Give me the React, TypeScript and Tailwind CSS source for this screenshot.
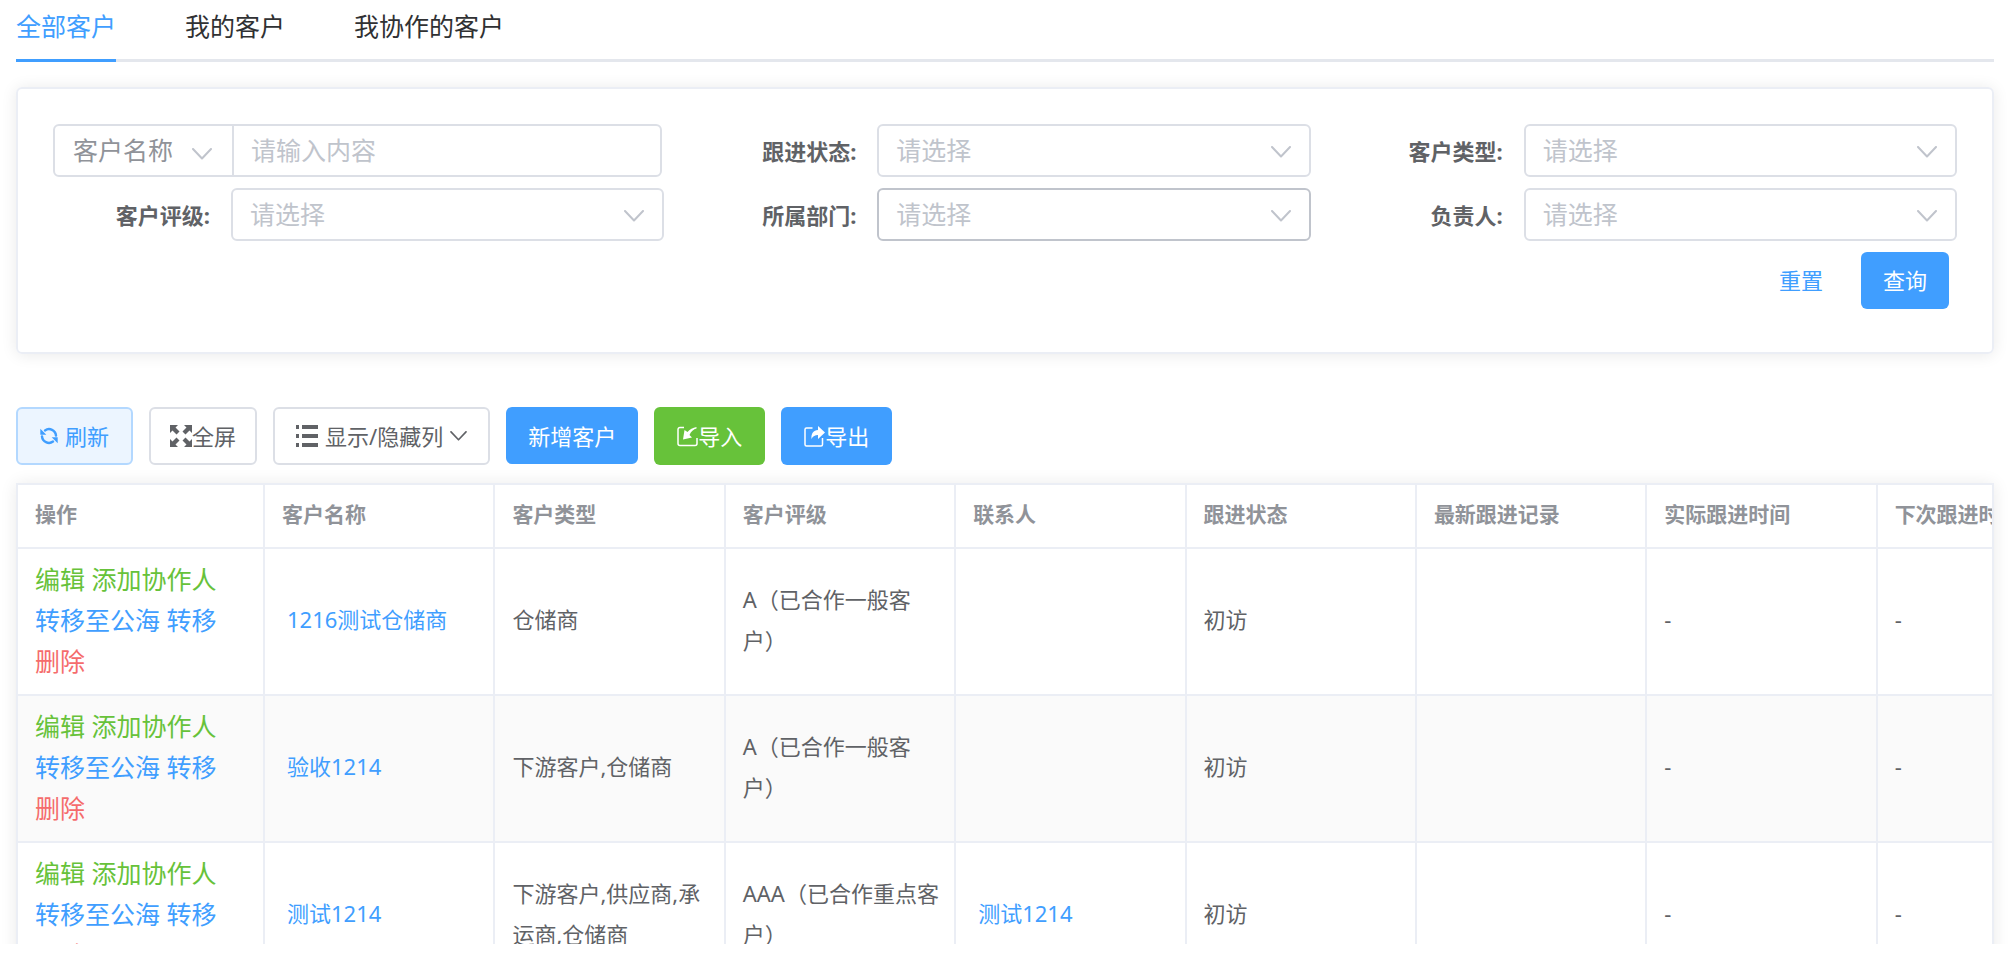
import { useState, type ReactNode } from "react";
import clsx from "clsx";

interface Customer {
  id: number;
  name: string;
  type: string;
  level: string;
  contact?: string;
  status: string;
  lastRecord?: string;
  actualTime: string;
  nextTime: string;
}

const TABS = ["全部客户", "我的客户", "我协作的客户"];

const COLUMNS = [
  "操作",
  "客户名称",
  "客户类型",
  "客户评级",
  "联系人",
  "跟进状态",
  "最新跟进记录",
  "实际跟进时间",
  "下次跟进时间",
];

const CUSTOMERS: Customer[] = [
  {
    id: 1,
    name: "1216测试仓储商",
    type: "仓储商",
    level: "A（已合作一般客户）",
    status: "初访",
    actualTime: "-",
    nextTime: "-",
  },
  {
    id: 2,
    name: "验收1214",
    type: "下游客户,仓储商",
    level: "A（已合作一般客户）",
    status: "初访",
    actualTime: "-",
    nextTime: "-",
  },
  {
    id: 3,
    name: "测试1214",
    type: "下游客户,供应商,承运商,仓储商",
    level: "AAA（已合作重点客户）",
    contact: "测试1214",
    status: "初访",
    actualTime: "-",
    nextTime: "-",
  },
];

function ChevronIcon({ className }: { className?: string }) {
  return (
    <svg
      viewBox="0 0 20 12"
      fill="none"
      stroke="currentColor"
      strokeWidth="2"
      strokeLinecap="round"
      strokeLinejoin="round"
      className={className}
      aria-hidden="true"
    >
      <path d="M1 1 10 10.500 19 1" />
    </svg>
  );
}

function RefreshIcon() {
  return (
    <svg viewBox="0 0 18 18" fill="none" className="h-[18px] w-[18px]" aria-hidden="true">
      <path d="M5 3.400A7 7 0 0 1 16 8.600" stroke="currentColor" strokeWidth="2.400" strokeLinecap="round" />
      <path d="M13 14.600A7 7 0 0 1 2 9.400" stroke="currentColor" strokeWidth="2.400" strokeLinecap="round" />
      <path d="M.3 1.800v6h6z" fill="currentColor" />
      <path d="M17.700 16.200v-6h-6z" fill="currentColor" />
    </svg>
  );
}

function FullscreenIcon() {
  return (
    <svg viewBox="0 0 22 22" fill="currentColor" className="h-[22px] w-[22px]" aria-hidden="true">
      <path d="M0 0h8L5.500 2.500l4 4-3 3-4-4L0 8z" />
      <path d="M22 0v8l-2.500-2.500-4 4-3-3 4-4L14 0z" />
      <path d="M0 22v-8l2.500 2.500 4-4 3 3-4 4L8 22z" />
      <path d="M22 22h-8l2.500-2.500-4-4 3-3 4 4L22 14z" />
    </svg>
  );
}

function ListIcon() {
  return (
    <svg viewBox="0 0 22 22" fill="currentColor" className="h-[22px] w-[22px]" aria-hidden="true">
      <path d="M0 0h3v4H0zM6 0h16v4H6zM0 9h3v4H0zM6 9h16v4H6zM0 18h3v4H0zM6 18h16v4H6z" />
    </svg>
  );
}

function ImportIcon() {
  return (
    <svg viewBox="0 0 21 21" fill="none" className="h-[21px] w-[21px]" aria-hidden="true">
      <path
        d="M7 1.500H3A2 2 0 0 0 1 3.500V17.500A2 2 0 0 0 3 19.500H18A2 2 0 0 0 20 17.500V12"
        stroke="currentColor"
        strokeWidth="1.500"
      />
      <path
        d="M19.500 1C16 1.500 12.500 3.500 10.500 6L7.500 4 6 13.500 15 11.500 12.500 9C14 5.500 16.500 3 19.500 2.500z"
        fill="currentColor"
      />
    </svg>
  );
}

function ExportIcon() {
  return (
    <svg viewBox="0 0 21 21" fill="none" className="h-[21px] w-[21px]" aria-hidden="true">
      <path
        d="M8.500 2H2.500A1.500 1.500 0 0 0 1 3.500V18.500A1.500 1.500 0 0 0 2.500 20H17A1.500 1.500 0 0 0 18.500 18.500V12"
        stroke="currentColor"
        strokeWidth="1.500"
      />
      <path d="M14 0 21 6.500 14 13V9C11 9 9 10 7.500 13 7 7.500 9.500 4 14 4z" fill="currentColor" />
    </svg>
  );
}

interface FilterSelectProps {
  id: string;
  label: string;
  active?: boolean;
}

function FilterSelect({ id, label, active = false }: FilterSelectProps) {
  return (
    <div className="flex items-center">
      <label htmlFor={id} className="w-[213px] pr-[21px] text-right text-[22px] leading-[40px] font-bold text-[#606266]">
        {label}:
      </label>
      <div className="relative flex-1">
        <select
          id={id}
          defaultValue=""
          className={clsx(
            "block h-[53px] w-full appearance-none rounded-md border-2 bg-white px-[17px] text-[25px] leading-[49px] text-[#c0c4cc] outline-none",
            active ? "border-[#c0c4cc]" : "border-[#dcdfe6]",
          )}
        >
          <option value="">请选择</option>
        </select>
        <ChevronIcon className="pointer-events-none absolute top-[22px] right-5 h-3 w-5 text-[#c0c4cc]" />
      </div>
    </div>
  );
}

function ToolbarButton({ className, children }: { className: string; children: ReactNode }) {
  return (
    <button
      type="button"
      className={clsx("flex items-center rounded-md text-[22px] leading-[30px] whitespace-nowrap", className)}
    >
      {children}
    </button>
  );
}

function RowActions() {
  return (
    <div className="pt-[2px] text-[25px] leading-[41px]">
      <div className="text-[#67c23a]">
        <button type="button">编辑</button> <button type="button">添加协作人</button>
      </div>
      <div className="text-[#409eff]">
        <button type="button">转移至公海</button> <button type="button">转移</button>
      </div>
      <div className="text-[#f56c6c]">
        <button type="button">删除</button>
      </div>
    </div>
  );
}

export default function App() {
  const [activeTab, setActiveTab] = useState(TABS[0]);

  return (
    <div className="h-screen bg-white pb-[10px] font-['Noto_Sans','Noto_Sans_CJK_SC',sans-serif] text-[#606266]">
      <div className="h-full overflow-hidden pr-[14px] pl-4">
        {/* Tabs */}
        <nav className="flex gap-[69px] border-b-3 border-[#e4e7ed]">
          {TABS.map((tab) => (
            <button
              key={tab}
              type="button"
              onClick={() => setActiveTab(tab)}
              className={clsx(
                "-mb-[3px] h-[62px] border-b-3 pb-[7px] text-[25px] leading-[52px]",
                tab === activeTab ? "border-[#409eff] text-[#409eff]" : "border-transparent text-[#303133]",
              )}
            >
              {tab}
            </button>
          ))}
        </nav>

        {/* Filters */}
        <form
          onSubmit={(e) => e.preventDefault()}
          className="mt-[25px] rounded-md border-2 border-[#ebeef5] pt-[35px] pr-[35px] pb-[43px] shadow-[0_1px_16px_rgba(0,0,0,0.09)]"
        >
          <div className="grid grid-cols-3 gap-y-[11px]">
            <div className="mr-[2px] ml-[35px] flex h-[53px] rounded-md border-2 border-[#dcdfe6]">
              <div className="relative w-[179px] border-r-2 border-[#dcdfe6]">
                <select
                  aria-label="搜索字段"
                  className="h-full w-full appearance-none pl-[18px] text-[25px] leading-[49px] text-[#909399] outline-none"
                >
                  <option>客户名称</option>
                </select>
                <ChevronIcon className="pointer-events-none absolute top-[22px] right-5 h-3 w-5 text-[#c0c4cc]" />
              </div>
              <input
                type="text"
                aria-label="搜索内容"
                placeholder="请输入内容"
                className="w-full min-w-0 flex-1 bg-transparent px-[17px] text-[25px] outline-none placeholder:text-[#c0c4cc]"
              />
            </div>
            <FilterSelect id="status" label="跟进状态" />
            <FilterSelect id="type" label="客户类型" />
            <FilterSelect id="level" label="客户评级" />
            <FilterSelect id="department" label="所属部门" active />
            <FilterSelect id="owner" label="负责人" />
          </div>
          <div className="mt-[11px] flex items-center justify-end gap-[38px] pr-2 text-[22px]">
            <button type="reset" className="text-[#409eff]">
              重置
            </button>
            <button type="submit" className="h-[57px] rounded-md bg-[#409eff] px-[22px] text-white">
              查询
            </button>
          </div>
        </form>

        {/* Toolbar */}
        <div className="mt-[53px] flex items-start gap-4">
          <ToolbarButton className="h-[58px] gap-[7px] border-2 border-[#b3d8ff] bg-[#ecf5ff] px-[22px] text-[#409eff]">
            <RefreshIcon />
            刷新
          </ToolbarButton>
          <ToolbarButton className="h-[58px] border-2 border-[#dcdfe6] bg-white px-[19px]">
            <FullscreenIcon />
            全屏
          </ToolbarButton>
          <ToolbarButton className="h-[58px] gap-[7px] border-2 border-[#dcdfe6] bg-white px-[21px]">
            <ListIcon />
            显示/隐藏列
            <ChevronIcon className="h-[10px] w-[17px]" />
          </ToolbarButton>
          <ToolbarButton className="h-[57px] bg-[#409eff] px-[22px] text-white">新增客户</ToolbarButton>
          <ToolbarButton className="h-[58px] bg-[#67c23a] px-[23px] text-white">
            <ImportIcon />
            导入
          </ToolbarButton>
          <ToolbarButton className="h-[58px] bg-[#409eff] px-[23px] text-white">
            <ExportIcon />
            导出
          </ToolbarButton>
        </div>

        {/* Customer table */}
        <div className="mt-[18px] overflow-hidden border-2 border-[#ebeef5] shadow-[0_1px_16px_rgba(0,0,0,0.09)]">
          <table className="w-[2090px] table-fixed border-separate border-spacing-0 text-left text-[22px] leading-[41px]">
            <colgroup>
              <col className="w-[247px]" />
              <col span={8} />
            </colgroup>
            <thead>
              <tr>
                {COLUMNS.map((title) => (
                  <th
                    key={title}
                    className="h-[64px] border-r-2 border-b-2 border-[#ebeef5] pr-3 pb-[3px] pl-[17px] text-[21px] font-bold whitespace-nowrap text-[#909399]"
                  >
                    {title}
                  </th>
                ))}
              </tr>
            </thead>
            <tbody>
              {CUSTOMERS.map((customer) => (
                <tr
                  key={customer.id}
                  className="even:bg-[#fafafa] *:h-[147px] *:border-r-2 *:border-b-2 *:border-[#ebeef5] *:pr-3 *:pb-[4px] *:pl-[17px]"
                >
                  <td>
                    <RowActions />
                  </td>
                  <td>
                    <a href="#" className="ml-[5px] text-[#409eff]">
                      {customer.name}
                    </a>
                  </td>
                  <td>{customer.type}</td>
                  <td>{customer.level}</td>
                  <td>
                    {customer.contact && (
                      <a href="#" className="ml-[5px] text-[#409eff]">
                        {customer.contact}
                      </a>
                    )}
                  </td>
                  <td>{customer.status}</td>
                  <td>{customer.lastRecord}</td>
                  <td>{customer.actualTime}</td>
                  <td>{customer.nextTime}</td>
                </tr>
              ))}
            </tbody>
          </table>
        </div>
      </div>
    </div>
  );
}
